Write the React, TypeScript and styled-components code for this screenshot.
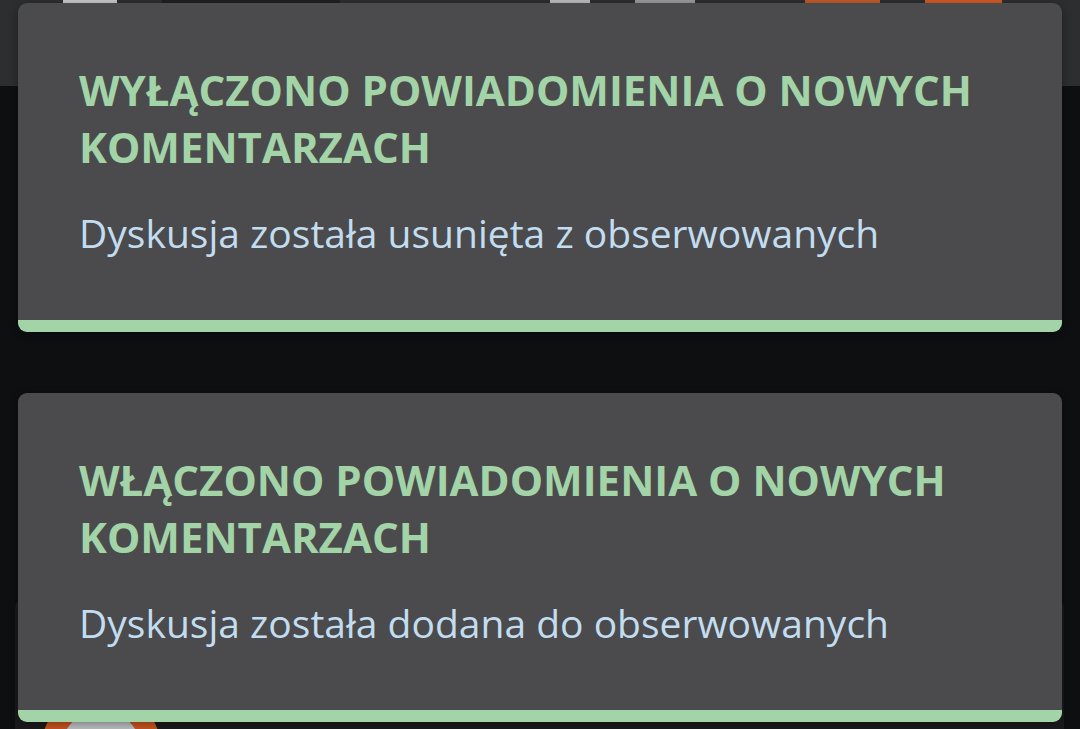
import styled, { createGlobalStyle } from 'styled-components';

const GlobalStyle = createGlobalStyle`
  html, body {
    margin: 0;
    padding: 0;
    background: #0e0f11;
    font-family: "Open Sans", "Noto Sans", sans-serif;
    overflow: hidden;
  }
`;

const Page = styled.div`
  position: relative;
  width: 1080px;
  height: 729px;
  background: #0e0f11;
  overflow: hidden;
`;

const Header = styled.header`
  height: 86px;
  background: #2d2e2f;
  display: flex;
  align-items: flex-start;
  padding: 0 40px 0 63px;
  gap: 45px;
`;

const HeaderChip = styled.div<{ $w: number; $bg: string }>`
  width: ${p => p.$w}px;
  height: 40px;
  margin-top: -20px;
  border-radius: 6px;
  background: ${p => p.$bg};
  flex-shrink: 0;
`;

const Spacer = styled.div<{ $w: number }>`
  width: ${p => p.$w}px;
  flex-shrink: 0;
`;

const Content = styled.main`
  padding: 512px 16px 0 15px;
`;

const BehindCard = styled.div`
  height: 220px;
  background: #1a1a1c;
  border-radius: 10px;
  padding: 92px 0 0 26px;
`;

const Avatar = styled.div`
  width: 120px;
  height: 120px;
  border-radius: 50%;
  border: 20px solid #c4531f;
  background: #b9bcc0;
  box-sizing: border-box;
`;

const ToastStack = styled.div`
  position: absolute;
  top: 3px;
  left: 18px;
  right: 18px;
  display: flex;
  flex-direction: column;
  gap: 61px;
`;

const Toast = styled.div`
  height: 329px;
  box-sizing: border-box;
  background: #4b4b4d;
  border-radius: 9px;
  border-bottom: 12px solid #a3d4a8;
  padding: 58px 40px 0 61px;
  box-shadow: 0 2px 8px rgba(0, 0, 0, 0.35);
`;

const Title = styled.div`
  color: #a3d4a8;
  font-weight: 700;
  font-size: 42px;
  line-height: 57px;
  text-transform: uppercase;
`;

const Message = styled.div`
  margin-top: 32px;
  color: #c3ddf0;
  font-size: 39px;
  line-height: 52px;
`;

const toasts = [
  {
    title: 'Wyłączono powiadomienia o nowych komentarzach',
    message: 'Dyskusja została usunięta z obserwowanych',
  },
  {
    title: 'Włączono powiadomienia o nowych komentarzach',
    message: 'Dyskusja została dodana do obserwowanych',
  },
];

const App = () => {
  return (
    <>
      <GlobalStyle />
      <Page>
        <Header>
          <HeaderChip $w={54} $bg="#c9c9c9" />
          <HeaderChip $w={178} $bg="#1f2021" />
          <Spacer $w={120} />
          <HeaderChip $w={40} $bg="#bdbdbd" />
          <HeaderChip $w={60} $bg="#9a9a9a" />
          <Spacer $w={20} />
          <HeaderChip $w={75} $bg="#c05a2a" />
          <HeaderChip $w={77} $bg="#d25a25" />
        </Header>
        <Content>
          <BehindCard>
            <Avatar />
          </BehindCard>
        </Content>
        <ToastStack>
          {toasts.map(t => (
            <Toast key={t.title}>
              <Title>{t.title}</Title>
              <Message>{t.message}</Message>
            </Toast>
          ))}
        </ToastStack>
      </Page>
    </>
  );
};

export default App;
